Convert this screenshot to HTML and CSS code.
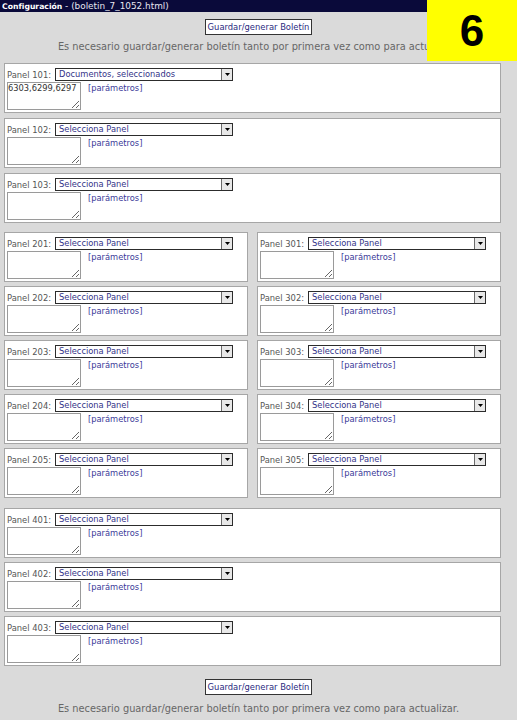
FILE: index.html
```html
<!DOCTYPE html>
<html lang="es">
<head>
<meta charset="utf-8">
<title>Configuración</title>
<link rel="stylesheet" href="styles.css">
</head>
<body>
<div class="topbar"><b>Configuración</b> - (boletin_7_1052.html)</div>
<div class="badge">6</div>

<div class="actions">
  <button class="btn" type="button">Guardar/generar Boletín</button>
  <p class="note">Es necesario guardar/generar boletín tanto por primera vez como para actualizar.</p>
</div>

<div class="panels">
  <div class="group">
    <div class="panel">
      <div class="row1"><span class="lbl">Panel 101:</span><div class="sel"><span class="val">Documentos, seleccionados</span><span class="arr"><svg width="5" height="3" viewBox="0 0 5 3"><path d="M0 0H5L2.5 3Z" fill="#000"/></svg></span></div></div>
      <div class="row2"><textarea class="ta">6303,6299,6297</textarea><a class="param" href="#">[parámetros]</a></div>
    </div>
    <div class="panel">
      <div class="row1"><span class="lbl">Panel 102:</span><div class="sel"><span class="val">Selecciona Panel</span><span class="arr"><svg width="5" height="3" viewBox="0 0 5 3"><path d="M0 0H5L2.5 3Z" fill="#000"/></svg></span></div></div>
      <div class="row2"><textarea class="ta"></textarea><a class="param" href="#">[parámetros]</a></div>
    </div>
    <div class="panel">
      <div class="row1"><span class="lbl">Panel 103:</span><div class="sel"><span class="val">Selecciona Panel</span><span class="arr"><svg width="5" height="3" viewBox="0 0 5 3"><path d="M0 0H5L2.5 3Z" fill="#000"/></svg></span></div></div>
      <div class="row2"><textarea class="ta"></textarea><a class="param" href="#">[parámetros]</a></div>
    </div>
  </div>

  <div class="grid">
    <div class="panel">
      <div class="row1"><span class="lbl">Panel 201:</span><div class="sel"><span class="val">Selecciona Panel</span><span class="arr"><svg width="5" height="3" viewBox="0 0 5 3"><path d="M0 0H5L2.5 3Z" fill="#000"/></svg></span></div></div>
      <div class="row2"><textarea class="ta"></textarea><a class="param" href="#">[parámetros]</a></div>
    </div>
    <div class="panel">
      <div class="row1"><span class="lbl">Panel 301:</span><div class="sel"><span class="val">Selecciona Panel</span><span class="arr"><svg width="5" height="3" viewBox="0 0 5 3"><path d="M0 0H5L2.5 3Z" fill="#000"/></svg></span></div></div>
      <div class="row2"><textarea class="ta"></textarea><a class="param" href="#">[parámetros]</a></div>
    </div>
    <div class="panel">
      <div class="row1"><span class="lbl">Panel 202:</span><div class="sel"><span class="val">Selecciona Panel</span><span class="arr"><svg width="5" height="3" viewBox="0 0 5 3"><path d="M0 0H5L2.5 3Z" fill="#000"/></svg></span></div></div>
      <div class="row2"><textarea class="ta"></textarea><a class="param" href="#">[parámetros]</a></div>
    </div>
    <div class="panel">
      <div class="row1"><span class="lbl">Panel 302:</span><div class="sel"><span class="val">Selecciona Panel</span><span class="arr"><svg width="5" height="3" viewBox="0 0 5 3"><path d="M0 0H5L2.5 3Z" fill="#000"/></svg></span></div></div>
      <div class="row2"><textarea class="ta"></textarea><a class="param" href="#">[parámetros]</a></div>
    </div>
    <div class="panel">
      <div class="row1"><span class="lbl">Panel 203:</span><div class="sel"><span class="val">Selecciona Panel</span><span class="arr"><svg width="5" height="3" viewBox="0 0 5 3"><path d="M0 0H5L2.5 3Z" fill="#000"/></svg></span></div></div>
      <div class="row2"><textarea class="ta"></textarea><a class="param" href="#">[parámetros]</a></div>
    </div>
    <div class="panel">
      <div class="row1"><span class="lbl">Panel 303:</span><div class="sel"><span class="val">Selecciona Panel</span><span class="arr"><svg width="5" height="3" viewBox="0 0 5 3"><path d="M0 0H5L2.5 3Z" fill="#000"/></svg></span></div></div>
      <div class="row2"><textarea class="ta"></textarea><a class="param" href="#">[parámetros]</a></div>
    </div>
    <div class="panel">
      <div class="row1"><span class="lbl">Panel 204:</span><div class="sel"><span class="val">Selecciona Panel</span><span class="arr"><svg width="5" height="3" viewBox="0 0 5 3"><path d="M0 0H5L2.5 3Z" fill="#000"/></svg></span></div></div>
      <div class="row2"><textarea class="ta"></textarea><a class="param" href="#">[parámetros]</a></div>
    </div>
    <div class="panel">
      <div class="row1"><span class="lbl">Panel 304:</span><div class="sel"><span class="val">Selecciona Panel</span><span class="arr"><svg width="5" height="3" viewBox="0 0 5 3"><path d="M0 0H5L2.5 3Z" fill="#000"/></svg></span></div></div>
      <div class="row2"><textarea class="ta"></textarea><a class="param" href="#">[parámetros]</a></div>
    </div>
    <div class="panel">
      <div class="row1"><span class="lbl">Panel 205:</span><div class="sel"><span class="val">Selecciona Panel</span><span class="arr"><svg width="5" height="3" viewBox="0 0 5 3"><path d="M0 0H5L2.5 3Z" fill="#000"/></svg></span></div></div>
      <div class="row2"><textarea class="ta"></textarea><a class="param" href="#">[parámetros]</a></div>
    </div>
    <div class="panel">
      <div class="row1"><span class="lbl">Panel 305:</span><div class="sel"><span class="val">Selecciona Panel</span><span class="arr"><svg width="5" height="3" viewBox="0 0 5 3"><path d="M0 0H5L2.5 3Z" fill="#000"/></svg></span></div></div>
      <div class="row2"><textarea class="ta"></textarea><a class="param" href="#">[parámetros]</a></div>
    </div>
  </div>

  <div class="group group-last">
    <div class="panel">
      <div class="row1"><span class="lbl">Panel 401:</span><div class="sel"><span class="val">Selecciona Panel</span><span class="arr"><svg width="5" height="3" viewBox="0 0 5 3"><path d="M0 0H5L2.5 3Z" fill="#000"/></svg></span></div></div>
      <div class="row2"><textarea class="ta"></textarea><a class="param" href="#">[parámetros]</a></div>
    </div>
    <div class="panel">
      <div class="row1"><span class="lbl">Panel 402:</span><div class="sel"><span class="val">Selecciona Panel</span><span class="arr"><svg width="5" height="3" viewBox="0 0 5 3"><path d="M0 0H5L2.5 3Z" fill="#000"/></svg></span></div></div>
      <div class="row2"><textarea class="ta"></textarea><a class="param" href="#">[parámetros]</a></div>
    </div>
    <div class="panel">
      <div class="row1"><span class="lbl">Panel 403:</span><div class="sel"><span class="val">Selecciona Panel</span><span class="arr"><svg width="5" height="3" viewBox="0 0 5 3"><path d="M0 0H5L2.5 3Z" fill="#000"/></svg></span></div></div>
      <div class="row2"><textarea class="ta"></textarea><a class="param" href="#">[parámetros]</a></div>
    </div>
  </div>
</div>

<div class="actions actions-bottom">
  <button class="btn" type="button">Guardar/generar Boletín</button>
  <p class="note">Es necesario guardar/generar boletín tanto por primera vez como para actualizar.</p>
</div>
</body>
</html>
```

FILE: styles.css
```css
html, body {
  margin: 0;
  padding: 0;
}
body {
  background: #dadada;
  font-family: "DejaVu Sans", Verdana, sans-serif;
  color: #555;
  position: relative;
  width: 517px;
  height: 720px;
  overflow: hidden;
}
.topbar {
  height: 12px;
  line-height: 12px;
  background: #0a0a3a;
  color: #e6e6f0;
  font-size: 8.9px;
  padding-left: 2px;
  white-space: nowrap;
}
.topbar b {
  color: #fff;
  font-size: 7.7px;
}
.badge {
  position: absolute;
  top: 0;
  right: 0;
  width: 90px;
  height: 61px;
  background: #ffff00;
  display: flex;
  align-items: center;
  justify-content: center;
  font-family: "Liberation Sans", Arial, sans-serif;
  font-weight: bold;
  font-size: 44px;
  color: #000;
}
.actions {
  display: flex;
  flex-direction: column;
  align-items: center;
  padding-top: 7px;
}
.btn {
  box-sizing: border-box;
  height: 16px;
  margin: 0;
  padding: 0 2px;
  background: #fff;
  border: 1px solid #333;
  border-radius: 0;
  color: #2a2a80;
  font-family: "DejaVu Sans", Verdana, sans-serif;
  font-size: 8.4px;
  line-height: 14px;
}
.note {
  margin: 6px 0 0;
  font-size: 9.8px;
  line-height: 12px;
  color: #666;
  white-space: nowrap;
}
.actions-bottom {
  padding-top: 13px;
}
.actions-bottom .note {
  margin-top: 8px;
}
.panels {
  margin: 10px 0 0 4px;
  width: 497px;
}
.group {
  display: flex;
  flex-direction: column;
  gap: 5px;
}
.group-last {
  gap: 4px;
  margin-top: 10px;
}
.grid {
  display: grid;
  grid-template-columns: 244px 244px;
  column-gap: 9px;
  row-gap: 4px;
  margin-top: 9px;
}
.panel {
  box-sizing: border-box;
  height: 50px;
  background: #fff;
  border: 1px solid #a6a6a6;
  padding: 4px 2px 0 2px;
}
.row1 {
  display: flex;
  align-items: center;
  height: 13px;
}
.lbl {
  font-size: 8.4px;
  color: #555;
  margin-right: 4px;
  white-space: nowrap;
}
.sel {
  box-sizing: border-box;
  width: 178px;
  height: 13px;
  border: 1px solid #2c2c2c;
  background: #fff;
  display: flex;
  align-items: center;
  justify-content: space-between;
}
.val {
  font-size: 8.3px;
  color: #333388;
  padding-left: 3px;
  white-space: nowrap;
  line-height: 11px;
}
.arr {
  box-sizing: border-box;
  width: 11px;
  height: 11px;
  background: #e8e8e8;
  border-left: 1px solid #6a6a6a;
  display: flex;
  align-items: center;
  justify-content: center;
}
.arr svg {
  display: block;
}
.row2 {
  display: flex;
  align-items: flex-start;
  margin-top: 1px;
}
.ta {
  box-sizing: border-box;
  width: 74px;
  height: 28px;
  margin: 0;
  padding: 0;
  border: 1px solid #9a9a9a;
  font-family: "DejaVu Sans", Verdana, sans-serif;
  font-size: 8.3px;
  line-height: 10px;
  color: #333;
  background: #fff;
  resize: both;
  overflow: hidden;
}
.param {
  margin-left: 7px;
  margin-top: 1px;
  font-size: 8.3px;
  line-height: 10px;
  color: #3a3a99;
  text-decoration: none;
}
```
